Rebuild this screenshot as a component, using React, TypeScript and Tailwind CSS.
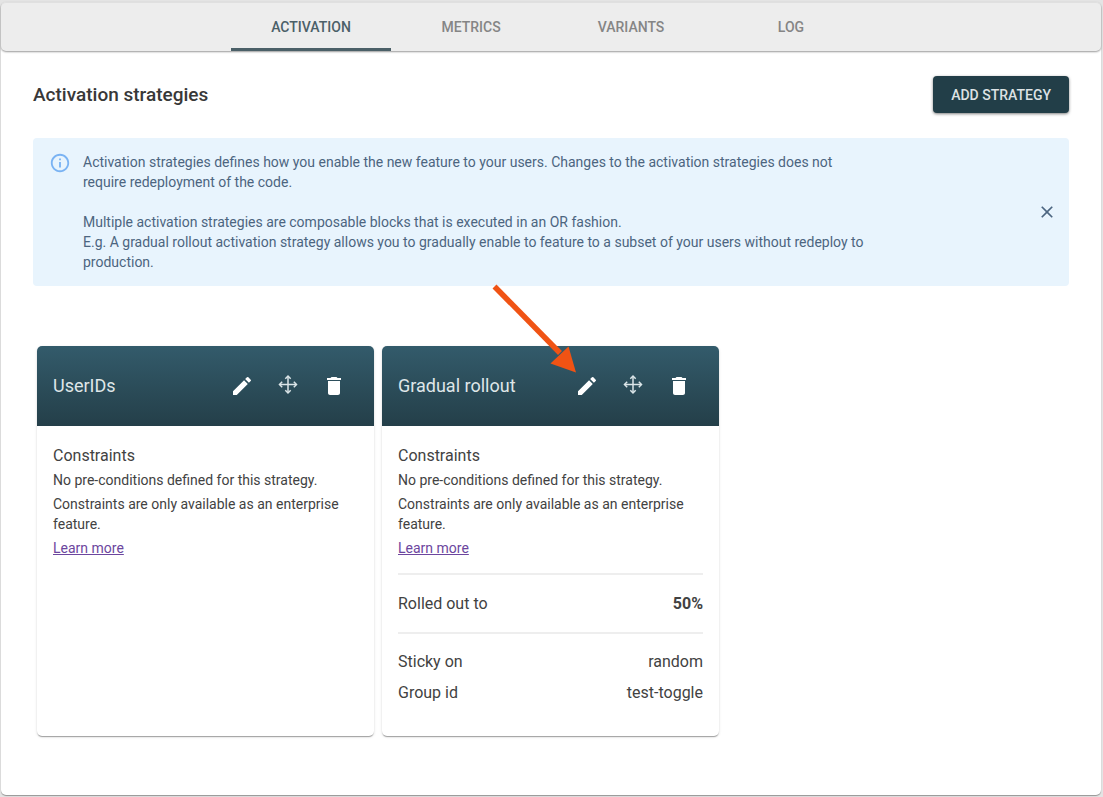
import type { ReactNode } from "react";
import { MdClose, MdDelete, MdEdit, MdInfoOutline } from "react-icons/md";

const tabs = ["Activation", "Metrics", "Variants", "Log"];

function MoveIcon() {
  return (
    <svg viewBox="0 0 24 24" className="size-6 text-[#dbe5e8]" fill="none" stroke="currentColor" strokeWidth="1.5">
      <path d="M12 2.500v16M4 10.500h16" />
      <path d="M9.300 4.700 12 2l2.700 2.700M9.300 16.300 12 19l2.700-2.700M6.200 7.800 3.500 10.500l2.700 2.700M17.800 7.800 20.500 10.500l-2.700 2.700" />
    </svg>
  );
}

function IconButton({ label, children }: { label: string; children: ReactNode }) {
  return (
    <button type="button" aria-label={label} className="flex size-[46px] items-center justify-center">
      {children}
    </button>
  );
}

function Row({ label, value, bold = false }: { label: string; value: string; bold?: boolean }) {
  return (
    <div className="flex justify-between text-base leading-[23px]">
      <dt>{label}</dt>
      <dd className={bold ? "font-bold" : ""}>{value}</dd>
    </div>
  );
}

function Arrow() {
  return (
    <svg
      viewBox="0 0 90 96"
      aria-hidden="true"
      className="pointer-events-none absolute -top-[62px] left-[108px] h-24 w-[90px]"
    >
      <path d="M4.500 2.500 70 69" stroke="#f05314" strokeWidth="5.500" />
      <path d="M86 88.500 60.500 79.500 78.500 62.500z" fill="#f05314" />
    </svg>
  );
}

function StrategyCard({ title, pointer, children }: { title: string; pointer?: ReactNode; children?: ReactNode }) {
  return (
    <article className="relative min-h-[390px] w-[337px] rounded-[5px] bg-white shadow-[0_2px_1px_-1px_rgba(0,0,0,0.2),0_1px_1px_0_rgba(0,0,0,0.14),0_1px_3px_0_rgba(0,0,0,0.12)]">
      <header className="flex h-20 items-center justify-between rounded-t-[5px] bg-linear-to-b from-[#335b6b] to-[#243f49] pr-[17px] pl-4 text-white">
        <h3 className="text-lg text-[#dfe6e8]">{title}</h3>
        <div className="flex">
          <IconButton label="Edit strategy">
            <MdEdit className="size-6" />
          </IconButton>
          <IconButton label="Move strategy">
            <MoveIcon />
          </IconButton>
          <IconButton label="Delete strategy">
            <MdDelete className="size-6" />
          </IconButton>
        </div>
      </header>
      <div className="px-4 pt-[18px] pb-7">
        <h4 className="text-base leading-6">Constraints</h4>
        <div className="flex flex-col gap-1 text-sm leading-5">
          <p className="pt-0.5">No pre-conditions defined for this strategy.</p>
          <p>Constraints are only available as an enterprise feature.</p>
          <a href="#learn-more" className="self-start text-[#6c469e] underline">
            Learn more
          </a>
        </div>
        {children}
      </div>
      {pointer}
    </article>
  );
}

export default function App() {
  return (
    <div className="flex min-h-screen flex-col bg-[#e4e4e4] pt-0.5 pr-0.5 pb-0.5 pl-px font-[Roboto,sans-serif] text-[#424242]">
      <main className="flex-1 rounded-[5px] bg-white shadow-[0_1px_1px_rgba(0,0,0,0.35)]">
        <nav
          role="tablist"
          aria-label="Feature toggle"
          className="flex h-[49px] justify-center rounded-[5px] border-t border-[#e0e0e0] bg-[#ededed] shadow-[0_1px_2px_rgba(0,0,0,0.4)]"
        >
          {tabs.map((tab, i) => (
            <button
              key={tab}
              type="button"
              role="tab"
              aria-selected={i === 0}
              className={
                i === 0
                  ? "w-40 border-b-3 border-[#4b6068] pt-[3px] text-sm font-medium text-[#4b6068] uppercase"
                  : "w-40 border-b-3 border-transparent pt-[3px] text-sm font-medium text-[#858585] uppercase"
              }
            >
              {tab}
            </button>
          ))}
        </nav>

        <div className="px-8 pt-[25px]">
          <div className="flex items-center justify-between">
            <h2 className="text-[19px] leading-7 font-medium text-[#383838]">Activation strategies</h2>
            <button
              type="button"
              className="h-[37px] rounded-[4px] bg-[#223e48] px-[18px] text-sm font-medium text-[#dde2e4] uppercase shadow-[0_1px_3px_rgba(0,0,0,0.5)]"
            >
              Add strategy
            </button>
          </div>

          <section role="alert" className="mt-[25px] flex rounded-[4px] bg-[#e8f4fd] py-3.5 pr-3 pl-4 text-[#4c6580]">
            <MdInfoOutline className="size-[22px] shrink-0 text-[#7ab3f3]" />
            <div className="ml-3 max-w-[790px] flex-1 text-sm leading-5">
              <p>
                Activation strategies defines how you enable the new feature to your users. Changes to the activation
                strategies does not require redeployment of the code.
              </p>
              <p className="mt-5">
                Multiple activation strategies are composable blocks that is executed in an OR fashion.
                <br />
                E.g. A gradual rollout activation strategy allows you to gradually enable to feature to a subset of your
                users without redeploy to production.
              </p>
            </div>
            <button type="button" aria-label="Close" className="ml-auto self-center">
              <MdClose className="size-5" />
            </button>
          </section>

          <section aria-label="Strategies" className="mt-[60px] flex flex-wrap gap-2 px-1 pb-14">
            <StrategyCard title="UserIDs" />
            <StrategyCard title="Gradual rollout" pointer={<Arrow />}>
              <dl>
                <div className="mt-[15px] border-y-2 border-[#eeeeee] py-[17px]">
                  <Row label="Rolled out to" value="50%" bold />
                </div>
                <div className="flex flex-col gap-2 pt-4">
                  <Row label="Sticky on" value="random" />
                  <Row label="Group id" value="test-toggle" />
                </div>
              </dl>
            </StrategyCard>
          </section>
        </div>
      </main>
    </div>
  );
}
